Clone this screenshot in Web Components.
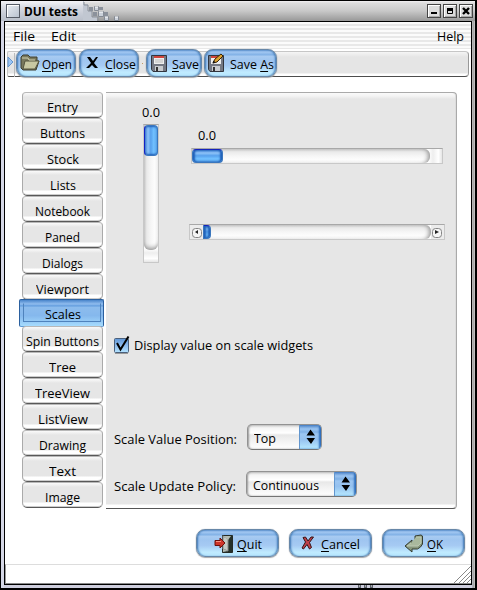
<!DOCTYPE html>
<html lang="en"><head><meta charset="utf-8"><title>DUI tests</title>
<style>
html,body{margin:0;width:477px;height:590px;overflow:hidden;background:#000}
body{font:13px/16px "Open Sans","Noto Sans",sans-serif;color:#000}
</style></head><body>
<dui-window></dui-window>
<script>
const define=(name,html,setup)=>customElements.define(name,class extends HTMLElement{
  connectedCallback(){
    if(this.shadowRoot)return;
    this.attachShadow({mode:'open'}).innerHTML=typeof html==='function'?html(this):html;
    if(setup)setup(this);
  }
});

/* A run of text fitted to an exact width; u = index of the underlined mnemonic. */
define('ui-text',el=>{
  const t=el.getAttribute('t'),u=el.getAttribute('u');
  const body=u===null?t:t.slice(0,+u)+'<u>'+t[+u]+'</u>'+t.slice(+u+1);
  return `<style>:host{display:block;flex:none;white-space:nowrap;line-height:16px}
  span{display:inline-block;transform-origin:0 50%;white-space:pre}u{text-underline-offset:2px;text-decoration-thickness:1px;text-decoration-skip-ink:none}</style><span>${body}</span>`;
},el=>{
  const s=el.shadowRoot.querySelector('span'),w=+el.getAttribute('w');
  if(w){const n=s.getBoundingClientRect().width;s.style.transform=`scaleX(${w/n})`;el.style.width=w+'px';}
});

define('title-bar',`<style>
:host{display:flex;height:20px;align-items:center;background:linear-gradient(#f2f0f2 0,#dcdcdc 2px,#c8c8c8 50%,#989898);position:relative}
.tab{height:20px;width:82px;background:linear-gradient(#f4f4f8,#dcdfe6 25%,#c6cbd5 65%,#b9bfca);display:flex;align-items:center}
.box{width:12px;height:12px;margin:0 4px 0 5px;border:1px solid #555b66;background:linear-gradient(135deg,#e8ecf2,#bac3d0);box-shadow:inset 1px 1px #fff}
ui-text{font-weight:bold;font-size:12px;margin-top:1px}
svg{width:40px;height:20px;flex:none}.sp{flex:1}
.b{width:12px;height:12px;border:1px solid #444;box-shadow:inset 1px 1px #fff,inset -1px -1px #aaa;background:#ddd;margin-right:2px}
.b svg{width:12px;height:12px;display:block}
</style><div class="tab"><div class="box"></div><ui-text t="DUI tests" w="54"></ui-text></div>
<svg viewBox="0 0 40 20"><path d="M0 0h1v3h4v7h4v6h5v4H0z" fill="#c1c7d1"/><path d="M1 1v3h4v6h4v6h6v4" fill="none" stroke="#8b919b"/>
<g fill="#cbd1da" stroke="#858b95"><path d="M11.500 5.500h4v4h-4zM15.500 10.500h5v5h-5zM21.500 15.500h4v4h-4zM31.500 15.500h4v4h-4z"/></g><path d="M6 6h4v4H6zM10 11h4v4h-4zM16 6h4v3h-4zM21 11h4v4h-4z" fill="#8b919b"/><path d="M12 6h3M16 11h4M22 16h3M32 16h3" stroke="#fff"/></svg>
<div class="sp"></div>
<div class="b"><svg><path d="M3 7h6v2H3z"/></svg></div><div class="b"><svg><path d="M3.500 3.500h5v5h-5z" stroke="#000" fill="none"/><path d="M3 3h6v3H3z"/></svg></div><div class="b"><svg><path d="M3 3l6 6m0-6l-6 6" stroke="#000" stroke-width="2.400"/></svg></div>`);

define('menu-bar',`<style>:host{display:flex;height:27px;box-sizing:border-box;padding:0 7px 0 8px;align-items:center;background:repeating-linear-gradient(#fbfbfb 0 2px,#e8e8e8 2px 4px)}
.sp{flex:1}.e{margin-left:16px}</style>
<ui-text t="File" w="22"></ui-text><ui-text class="e" t="Edit" w="25"></ui-text><div class="sp"></div><ui-text t="Help" w="27"></ui-text>`);

const icons={
open:'<svg width="20" height="18"><path d="M1 3l2-2h5l2 2h7v4h2l-3 9H3L1 14z" fill="#79795d" stroke="#3e3e30"/><path d="M5 7h14l-4 8H3z" fill="#c8c8a2" stroke="#55553e"/><path d="M2 4h6l1 2h6" stroke="#d0d0b0" fill="none"/></svg>',
close:'<svg width="20" height="18"><path d="M5 3h3l3 4 3-4h2l-4 6 4 5h-3l-3-3-3 3H4l5-5z" fill="#000"/></svg>',
save:'<svg width="18" height="19"><path d="M1.500 1.500h15v16H3l-1.500-2z" fill="#747883" stroke="#32353e"/><path d="M4 2h10v8H4z" fill="#eee"/><path d="M4 2h10v2H4z" fill="#d0443c"/><path d="M5 6h8M5 8h8" stroke="#bbb"/><path d="M5 12h8v5H5z" fill="#c9ccd0"/><path d="M6 13h2v4H6z" fill="#333"/></svg>',
saveas:'<svg width="19" height="20"><path d="M1.500 2.500h15v16H3l-1.500-2z" fill="#747883" stroke="#32353e"/><path d="M4 3h10v8H4z" fill="#eee"/><path d="M4 3h10v2H4z" fill="#d0443c"/><path d="M5 13h8v5H5z" fill="#c9ccd0"/><path d="M6 14h2v4H6z" fill="#333"/><path d="M6 10l2-4 6-5 2 2-6 6z" fill="#dba030" stroke="#382506"/><path d="M5.500 10.500l1-3 2 2z" fill="#111"/></svg>',
quit:'<svg width="20" height="19"><path d="M8.500 1.500h10v17h-10z" fill="#253029" stroke="#252b26"/><path d="M9 2l5 3v12l-5-2z" fill="#c4c9c4" stroke="#888"/><path d="M9 2h8l-3 4zM9 18v-3l5 2z" fill="#b4bcb4"/><path d="M1 6.500h5V4l5 5-5 5v-2.500H1z" fill="#cf3429" stroke="#6b110d"/><path d="M2 7.500h5" stroke="#f89080"/></svg>',
cancel:'<svg width="14" height="16"><path d="M2 2.500l2.500-.5 2.500 4 3-4h2.500l-4 5.500 2 5-2 1.500-2.500-4.500-3.500 4.500-1.500-1 3.500-6z" fill="#c0404a" stroke="#351316"/></svg>',
ok:'<svg width="20" height="19"><path d="M11 2l6-1 1.500 1v8l-2 3-3 2H8v3l-7-6 7-6v3h3z" fill="#87977d" stroke="#353c31"/><path d="M12 3h5v6l-3 3H3l4-3" fill="#a9b89d" stroke="#bdc9b3"/></svg>'
};
define('aqua-button',el=>`<style>
:host{display:flex;flex:none;box-sizing:border-box;width:${el.getAttribute('w')}px;height:${el.getAttribute('h')||28}px;align-items:center;justify-content:center;
border:1px solid #6787a8;border-radius:9px;
background:linear-gradient(#5f93cf 0,#a2c7f2 2px,#7fb0e5 5px,#a9cbf2 6px,#9fc5f0 10px,#a6caf3 60%,#c0ebff 86%,#b4e4fc);
box-shadow:0 0 1px 0 #8a98a6,0 1px 1px #aaa,inset 2px 0 2px -1px #3d77b5,inset -2px 0 2px -1px #3d77b5}
svg{display:block;flex:none}ui-text{margin:1px 0 0 ${el.getAttribute('g')||3}px}
</style>${icons[el.getAttribute('icon')]}<ui-text t="${el.getAttribute('t')}" u="${el.getAttribute('u')||0}" w="${el.getAttribute('tw')}"></ui-text>`);

define('tool-bar',`<style>:host{display:flex;box-sizing:border-box;height:28px;position:relative;margin:0 2px;padding:0;align-items:center}
:host::before{content:"";position:absolute;inset:2px 0 0 0;border:1px solid #c6c6c6;border-bottom-color:#4d4d4d;border-right-color:#999;border-radius:2px 4px 4px 2px;background:linear-gradient(#f5f5f5,#e5e5e5 5px,#e5e5e5 21px,#fff 22px)}
.a{position:relative;width:8px;height:24px;margin-top:4px;border-right:1px solid #bbb;box-sizing:border-box}
.a svg{display:block}
aqua-button{position:relative;margin-right:3px}.dot{position:relative;width:1px;height:1px;background:#c39a65;margin:0 3px 0 0}
</style><div class="a"><svg width="7" height="22"><path d="M1 4l5 5-5 5z" fill="#9bc5f4" stroke="#6696cc"/></svg></div>
<aqua-button style="margin-left:1px" icon="open" t="Open" w="60" tw="30" g="2"></aqua-button>
<aqua-button icon="close" t="Close" w="60" tw="31" g="3"></aqua-button>
<div class="dot"></div>
<aqua-button icon="save" t="Save" w="56" tw="27" g="4"></aqua-button>
<aqua-button style="margin-left:-1px" icon="saveas" t="Save As" u="5" w="73" tw="44" g="4"></aqua-button>`);

define('side-tab',el=>`<style>:host{display:block;height:26px;box-sizing:border-box;position:relative}
div{height:26px;box-sizing:border-box;border:1px solid #aaa;border-top-color:#b8b8b8;border-bottom:1px solid #585858;border-radius:4px 4px 5px 5px;background:linear-gradient(#fafafa,#e6e6e6 4px,#e6e6e6 19px,#fff 20px);box-shadow:inset 0 -1px #ccc;display:flex;justify-content:center;align-items:center;padding-top:3px}
:host([on]) div{position:absolute;left:-3px;right:-1px;top:-1px;height:28px;border:1px solid #2b609f;border-bottom-color:#5f9bd5;border-radius:2px;box-shadow:none;background:linear-gradient(#4884ca,#91bdef 4px,#609bdd 6px,#8dbced 7px,#85b8ed 60%,#a6dcfe);padding:2px 0 0 2px}
:host([on]) div::after{content:"";position:absolute;inset:3px 2px 4px 3px;border:1px solid #4f83bd;border-top-color:transparent}
</style><div><ui-text t="${el.getAttribute('t')}" w="${el.getAttribute('w')}"></ui-text></div>`);

define('tab-list',`<style>:host{display:block;width:81px;flex:none}</style>`+[['Entry',31],['Buttons',45],['Stock',32],['Lists',26],['Notebook',55],['Paned',35],['Dialogs',41],['Viewport',53],['Scales',36],['Spin Buttons',73],['Tree',27],['TreeView',55],['ListView',50],['Drawing',47],['Text',27],['Image',35]].map(([t,w])=>`<side-tab t="${t}" w="${w}" ${t==='Scales'?'on':''}></side-tab>`).join(''));

define('ui-scale',el=>{
 const v=el.hasAttribute('vertical'),bar=el.hasAttribute('bar');
 const across=v?'to right':'to bottom';
 return `<style>:host{display:flex;flex-direction:${v?'column':'row'};box-sizing:border-box;width:${v?16:bar?256:252}px;height:${v?139:16}px;border:1px solid #c8c8c8;border-top-color:#a8a8a8;background:linear-gradient(${v?'to bottom':'to right'},#e2e2e2,#fff 25%,#eee 50%,#fff 80%,#e5e5e5) ${v?'bottom/100% 18px':'right/18px 100%'} no-repeat}
 .t{flex:1;display:flex;flex-direction:inherit;background:linear-gradient(${across},#c5c5c5,#eaeaea 20%,#f6f6f6 50%,#fcfcfc 75%,#f1f1f1);border-radius:${v?'0 0 6px 6px':'0 6px 6px 0'};box-shadow:inset ${v?'0 -5px 4px -3px':'-5px 0 4px -3px'} #999}
 .s{box-sizing:border-box;${v?'width:14px;height:31px':`width:${bar?8:31}px;height:14px`};border-radius:${bar?'0 4px 4px 0':'4px'};border:1px solid #3a76bd;${v?'border-left-color:#1322c5':'border-top-color:#1423bd'};
 background:linear-gradient(${across},#417fd1,#8ec3f8 25%,#57a1ed 48%,#71c0ff 72%,#5da8ec);box-shadow:inset ${v?'0 2px 2px -1px #1f60b8,inset 0 -2px 2px -1px':'2px 0 2px #1f60b8,inset -2px 0 2px'} #1f60b8}
 svg{display:block;flex:none;background:#ececec}
 </style>${bar?'<svg width="13" height="14"><rect x="2.500" y="3.500" width="9" height="9" rx="3" fill="#f5f5f5" stroke="#858585"/><path d="M5 7l3-2v4z" fill="#222"/></svg>':''}<div class="t"><div class="s"></div></div>${bar?'<svg width="13" height="14"><rect x="1.500" y="3.500" width="9" height="9" rx="3" fill="#f5f5f5" stroke="#858585"/><path d="M4 5l4 2-4 2z" fill="#222"/></svg>':`<div style="flex:none;${v?'height':'width'}:12px"></div>`}`;
});

define('option-menu',el=>`<style>:host{display:flex;box-sizing:border-box;width:${el.getAttribute('w')}px;height:26px;border:1px solid #929292;border-bottom-color:#747474;border-radius:5px;overflow:hidden;align-items:stretch;background:linear-gradient(#d4d4d4,#f5f5f5 3px,#fff 8px,#e8e8e8 10px,#f0f0f0 60%,#fff);box-shadow:inset 1px 0 2px #999}
ui-text{margin:5px 0 0 6px}.sp{flex:1}
.a{width:21px;background:linear-gradient(#5187c8,#9bc5f2 4px,#7fb0e5 7px,#9cc6f2 9px,#95c1ef 60%,#b8eaff);border-left:1px solid #6296ce;box-shadow:inset -2px 0 2px #2c6cba}
svg{display:block}</style><ui-text t="${el.getAttribute('t')}" w="${el.getAttribute('tw')}"></ui-text><div class="sp"></div><div class="a"><svg width="21" height="24"><path d="M10.500 4.500l4.500 6H6.500zM6.500 13H15l-4 6z"/></svg></div>`);

define('check-box',`<style>:host{display:flex;align-items:center;gap:4px;margin-left:-1px}svg{display:block}ui-text{margin-top:-3px}</style>
<svg width="17" height="20"><defs><linearGradient id="g" x2="0" y2="1"><stop stop-color="#5f96d6"/><stop offset=".5" stop-color="#8dbbee"/><stop offset="1" stop-color="#b4e4ff"/></linearGradient></defs><rect x="1.500" y="2.500" width="14" height="14" rx="1" fill="url(#g)" stroke="#4b607b"/><path d="M2 17.500h13" stroke="#999"/><path d="M4 7l3.500 6.500L15.500 .5" fill="none" stroke="#000" stroke-width="2"/></svg><ui-text t="Display value on scale widgets" w="179"></ui-text>`);

define('scales-page',`<style>
:host{display:block;box-sizing:border-box;width:351px;height:417px;padding:11px 0 0 8px;border:1px solid #aaa;border-left:0;border-bottom:1px solid #555;border-radius:0 4px 4px 0;background:linear-gradient(#fafafa,#f4f4f4 3px,#e6e6e6 6px,#e6e6e6 411px,#fff 412px);box-shadow:inset -1px 0 #ddd}
.top{display:flex;height:232px}.v{width:47px;margin-left:28px;padding-top:0}.v ui-scale{margin:4px 0 0 1px}
.h{padding-top:23px}.h>ui-text{margin:0 0 5px 9px}.h ui-scale{margin-left:2px}.h ui-scale[bar]{margin:60px 0 0}
.r{display:flex;align-items:center}.r ui-text{margin-top:3px}
</style><div class="top"><div class="v"><ui-text t="0.0" w="18"></ui-text><ui-scale vertical></ui-scale></div>
<div class="h"><ui-text t="0.0" w="18"></ui-text><ui-scale></ui-scale><ui-scale bar></ui-scale></div></div>
<check-box></check-box>
<div class="r" style="margin-top:68px"><ui-text t="Scale Value Position:" w="123"></ui-text><option-menu style="margin-left:10px" t="Top" w="75" tw="22"></option-menu></div>
<div class="r" style="margin-top:21px"><ui-text t="Scale Update Policy:" w="122"></ui-text><option-menu style="margin-left:10px" t="Continuous" w="111" tw="66"></option-menu></div>`);

define('status-bar',`<style>:host{display:flex;box-sizing:border-box;height:20px;border:1px solid #ddd;border-width:1px 0 1px 1px;border-left-color:#999;border-bottom-color:#888;justify-content:flex-end}svg{display:block}</style>
<svg width="18" height="18"><path d="M1 18L18 1M6 18L18 6M10 18l8-8M14 18l4-4" stroke="#888" fill="none"/></svg>`);

define('dui-window',`<style>
:host{display:block;box-sizing:border-box;width:477px;height:590px;border:1px solid #000;border-width:1px 2px 2px 1px;background:linear-gradient(to right,#d5d7e6 0 3px,transparent 3px 471px,#9b9b9b 472px,#cacaca 474px),linear-gradient(#ccc 560px,#cfcfdf)}
.body{box-sizing:border-box;margin:0 3px 3px;width:468px;height:564px;border:1px solid #000;background:#fff;display:flex;flex-direction:column}
.main{display:flex;gap:4px;margin:15px 0 0 17px}
.main tab-list{margin-right:-1px}
.act{display:flex;gap:10px;justify-content:flex-end;padding:20px 6px 0 0;height:35px}
.act aqua-button{margin-top:0}
.grip{position:absolute;left:357px;top:585px;display:block}
</style><title-bar></title-bar><div class="body"><menu-bar></menu-bar><tool-bar></tool-bar>
<div class="main"><tab-list></tab-list><scales-page></scales-page></div>
<div class="act"><aqua-button icon="quit" t="Quit" w="83" h="28" tw="25"></aqua-button><aqua-button icon="cancel" t="Cancel" w="83" h="28" tw="39" g="6"></aqua-button><aqua-button icon="ok" t="OK" w="83" h="28" tw="16"></aqua-button></div>
<status-bar></status-bar></div><svg class="grip" width="19" height="3"><path d="M1 0h3v3H1zM7 0h3v3H7zM13 0h3v3h-3z" fill="#5e626c"/><path d="M2 1h1M8 1h1M14 1h1" stroke="#eee"/></svg>`);
</script></body></html>
